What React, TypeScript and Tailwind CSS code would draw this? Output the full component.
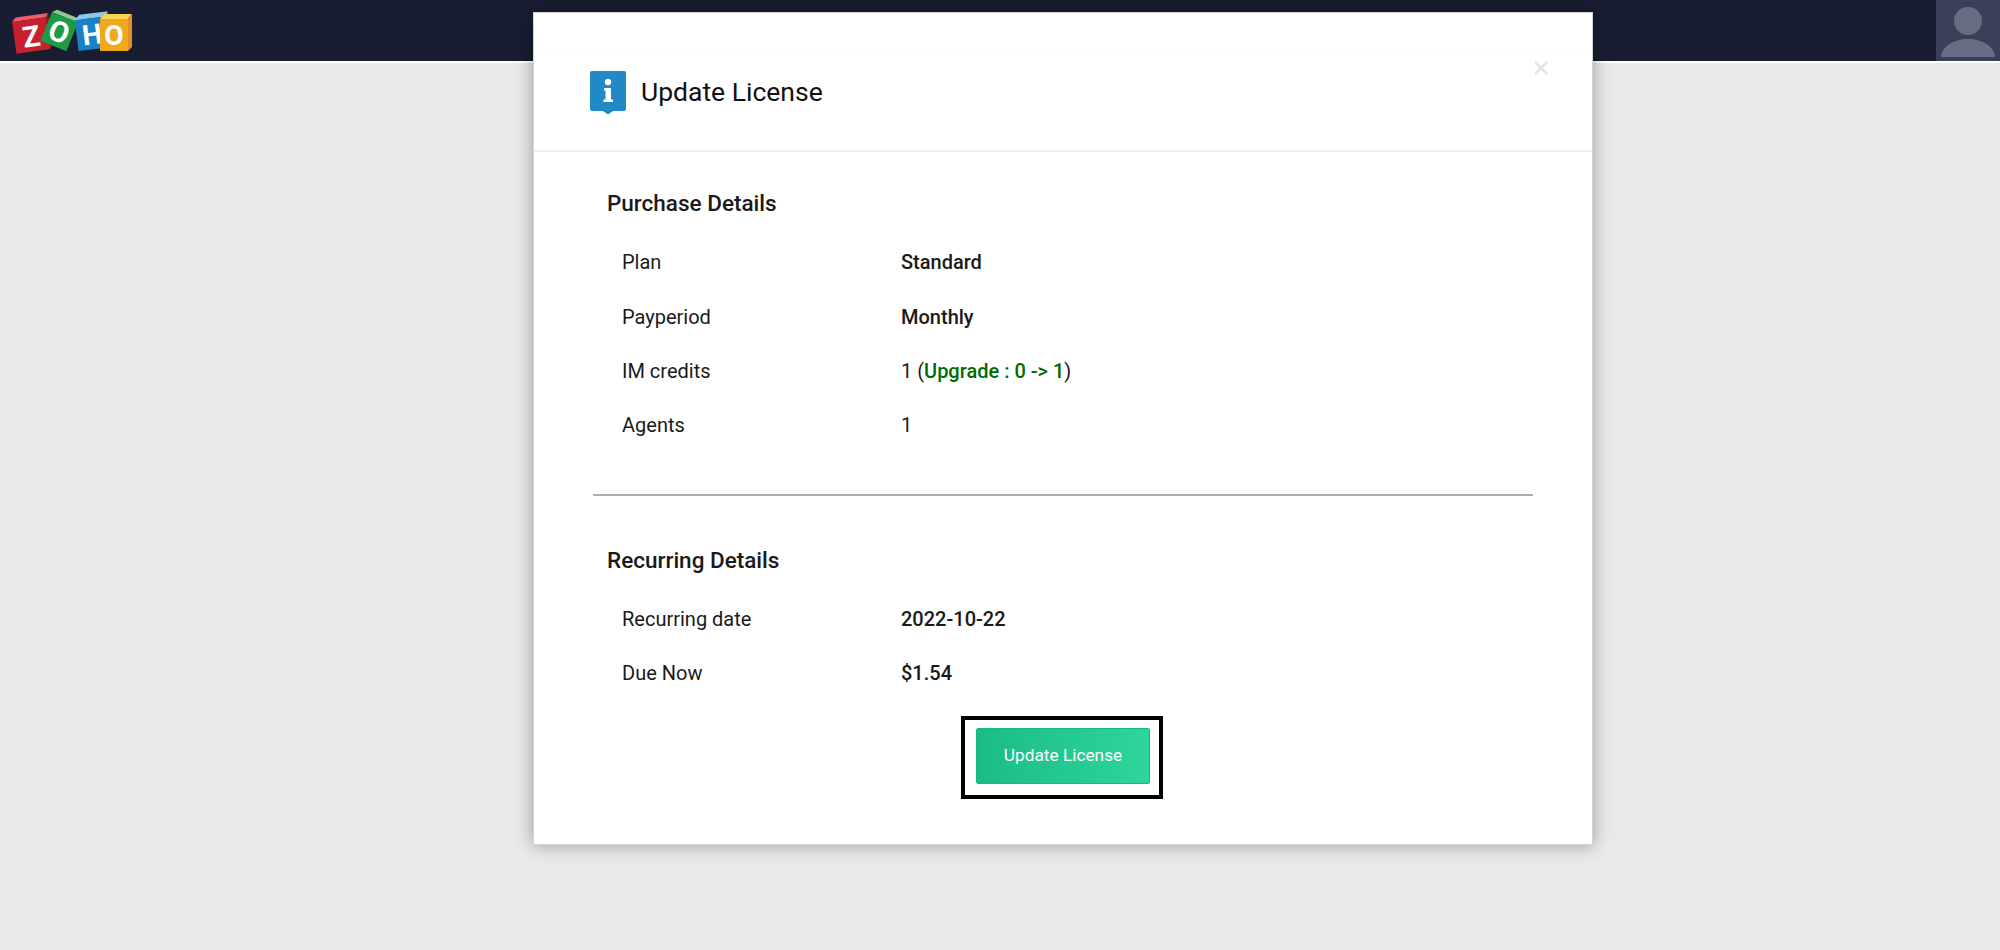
import React from "react";

const Row = ({ label, children }: { label: string; children: React.ReactNode }) => (
  <div className="flex h-[54.4px] items-center text-[20px] text-[#1a1a1a]">
    <div className="w-[294px] pl-[15px]">{label}</div>
    <div className="font-medium">{children}</div>
  </div>
);

const Logo = () => (
  <svg width="126" height="50" viewBox="0 0 126 50" className="mt-[7px] ml-[11px]">
    <g transform="rotate(-8 24 27)">
      <path d="M3 12l4-4h33l-3 4z" fill="#e8616a" />
      <path d="M37 12l3-4v32l-3 4z" fill="#96161f" />
      <rect x="3" y="12" width="34" height="32" fill="#c9202d" />
      <text x="20" y="39" textAnchor="middle" fontFamily="Roboto, sans-serif" fontWeight="700" fontSize="29" fill="#fff">Z</text>
    </g>
    <g transform="rotate(22 48 25)">
      <path d="M34 9l4-4h28l-4 4z" fill="#8dcb8f" />
      <rect x="34" y="9" width="28" height="31" fill="#1d9a45" />
      <text x="48" y="35" textAnchor="middle" fontFamily="Roboto, sans-serif" fontWeight="700" fontSize="29" fill="#fff">O</text>
    </g>
    <g transform="rotate(-7 84 30)">
      <path d="M66 11l5-5h29l-3 5z" fill="#8fc7ec" />
      <path d="M97 11l3-5v31l-3 4z" fill="#0f5f9e" />
      <rect x="66" y="11" width="31" height="31" fill="#1a81c6" />
      <text x="81.500" y="37" textAnchor="middle" fontFamily="Roboto, sans-serif" fontWeight="700" fontSize="28" fill="#fff">H</text>
    </g>
    <path d="M89 12l4-5h28l-4 5z" fill="#f7d44f" />
    <path d="M117 12l4-5v33l-4 4z" fill="#e3902a" />
    <rect x="89" y="12" width="28" height="32" fill="#f0a81f" />
    <text x="103" y="38" textAnchor="middle" fontFamily="Roboto, sans-serif" fontWeight="700" fontSize="28" fill="#fff">O</text>
  </svg>
);

export default function App() {
  return (
    <div className="relative h-[950px] w-[2000px] overflow-hidden bg-[#e9e9e9] font-['Roboto',sans-serif]">
      <header className="flex h-[63px] justify-between border-b-2 border-b-white bg-[#181d32]">
        <Logo />
        <div className="h-[61px] w-[64px] bg-[#3a3f5a]">
          <svg width="64" height="61" viewBox="0 0 64 61">
            <circle cx="32" cy="21" r="14" fill="#696d84" />
            <path d="M5 57c1-11 13-18 27-18s26 7 27 18z" fill="#696d84" />
          </svg>
        </div>
      </header>

      <div className="absolute left-[533px] top-[12px] h-[833px] w-[1060px] border border-[#d4d4d4] bg-white shadow-[0_0_16px_rgba(0,0,0,0.35)]">
        <div className="relative flex h-[139px] items-center border-b-2 border-b-[#f0f0f0] pl-[56px] pt-[22px]">
          <div className="absolute left-0 right-0 top-[39px] h-px bg-[#fafafa]" />
          <svg width="36" height="44" viewBox="0 0 36 44" className="mr-[15px]">
            <path d="M2 0h32a2 2 0 0 1 2 2v36a2 2 0 0 1-2 2H23l-5 3.500L13 40H2a2 2 0 0 1-2-2V2a2 2 0 0 1 2-2z" fill="#2189c6" />
            <circle cx="18" cy="11" r="3.200" fill="#fff" />
            <path d="M14 17h7v11.500h2V31H13.500v-2.500H15.500V19.500H14z" fill="#fff" />
          </svg>
          <span className="-mt-[2px] text-[26.500px] text-[#111]">Update License</span>
          <svg width="14" height="14" viewBox="0 0 14 14" className="absolute right-[44px] top-[48px]">
            <path d="M1 1l12 12M13 1L1 13" stroke="#e4e4e4" strokeWidth="2.500" />
          </svg>
        </div>

        <div className="px-[59px]">
          <div className="pl-[14px]">
            <h2 className="pt-[37px] text-[22.500px] font-medium leading-[28px] text-[#1a1a1a]">Purchase Details</h2>
            <div className="mt-[18px]">
              <Row label="Plan">Standard</Row>
              <Row label="Payperiod">Monthly</Row>
              <Row label="IM credits">
                <span className="font-normal">1 (</span>
                <span className="text-[#006b00]">Upgrade : 0 -&gt; 1</span>
                <span className="font-normal">)</span>
              </Row>
              <Row label="Agents">
                <span className="font-normal">1</span>
              </Row>
            </div>
          </div>
          <div className="mt-[41px] h-[2px] bg-[#adadad]" />
          <div className="pl-[14px]">
            <h2 className="pt-[50px] text-[22.500px] font-medium leading-[28px] text-[#1a1a1a]">Recurring Details</h2>
            <div className="mt-[18px]">
              <Row label="Recurring date">2022-10-22</Row>
              <Row label="Due Now">$1.54</Row>
            </div>
          </div>
          <div className="mt-[16px] flex justify-center pr-[2px]">
            <div className="border-4 border-black pl-[11px] pr-[9px] pt-[8px] pb-[11px]">
              <button className="h-[56px] w-[174px] rounded-[2px] border border-[#17b981] bg-gradient-to-r from-[#1abc85] to-[#2dd69b] text-[17.300px] font-normal text-white">
                Update License
              </button>
            </div>
          </div>
        </div>
      </div>
    </div>
  );
}
